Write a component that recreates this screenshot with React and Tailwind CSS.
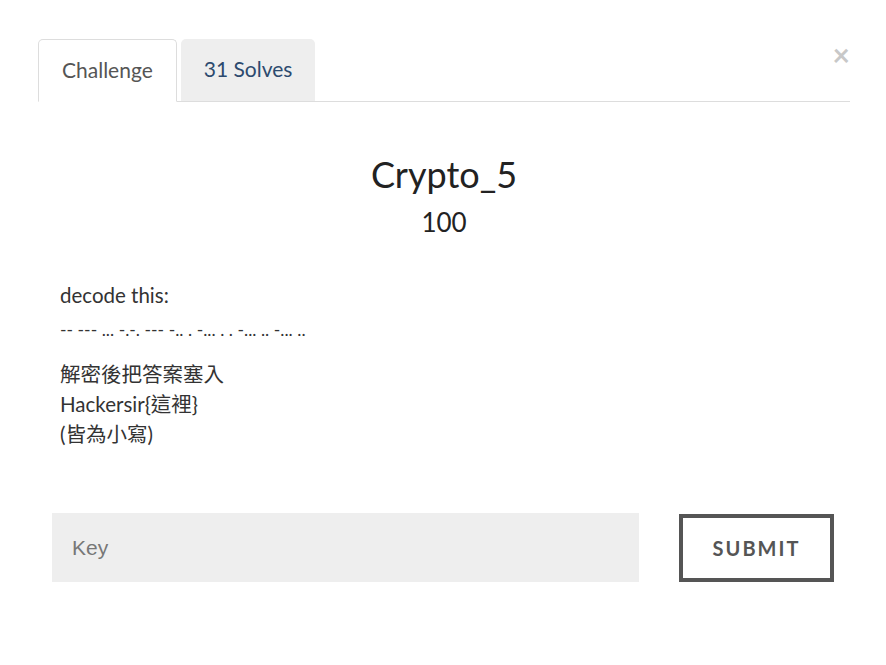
export default function App() {
  return (
    <div className="w-[886px] h-[665px] bg-white font-['Lato','Noto_Sans_CJK_TC',sans-serif] text-[#333]">
      <div className="pt-[39px] pl-[38px] pr-[36px]">
        {/* tabs */}
        <div className="relative flex items-end gap-[4px] border-b border-[#ddd] h-[63px]">
          <div className="h-[63px] px-[23px] pb-[2px] flex items-center bg-white border border-[#ddd] border-b-white rounded-t-[5px] -mb-px text-[21px] text-[#555]">
            Challenge
          </div>
          <div className="h-[62px] px-[23px] pb-[2px] flex items-center bg-[#eee] rounded-t-[5px] text-[21px] text-[#2c4a6e]">
            31 Solves
          </div>
          <button className="absolute right-[0px] top-[0px] text-[30px] leading-none text-[#c8c8c8] font-bold">
            ×
          </button>
        </div>

        {/* title */}
        <div className="flex flex-col items-center pt-[50px]">
          <h1 className="text-[36px] leading-[44px] text-[#222]">Crypto_5</h1>
          <div className="text-[26px] leading-[32px] mt-[10px] text-[#222]">100</div>
        </div>

        {/* description */}
        <div className="pl-[22px] pt-[41px] text-[#333]">
          <p className="text-[20.5px] leading-[33px]">
            decode this:
            <br />
            <span className="text-[17.6px]">-- --- ... -.-. --- -.. . -... . . -... .. -... ..</span>
          </p>
          <p className="mt-[13px] text-[20.5px] leading-[30px]">
            解密後把答案塞入
            <br />
            Hackersir{"{"}這裡{"}"}
            <br />
            (皆為小寫)
          </p>
        </div>

        {/* form */}
        <div className="flex items-center justify-between pl-[14px] pr-[16px] pt-[64px]">
          <div className="w-[587px] h-[69px] bg-[#eee] flex items-center px-[20px]">
            <input
              placeholder="Key"
              className="w-full bg-transparent outline-none text-[21px] font-['Liberation_Sans',sans-serif] placeholder:text-[#777]"
            />
          </div>
          <button className="w-[155px] h-[68px] border-[4px] border-[#555] text-[#555] text-[20px] font-bold tracking-[2px]">
            SUBMIT
          </button>
        </div>
      </div>
    </div>
  );
}
